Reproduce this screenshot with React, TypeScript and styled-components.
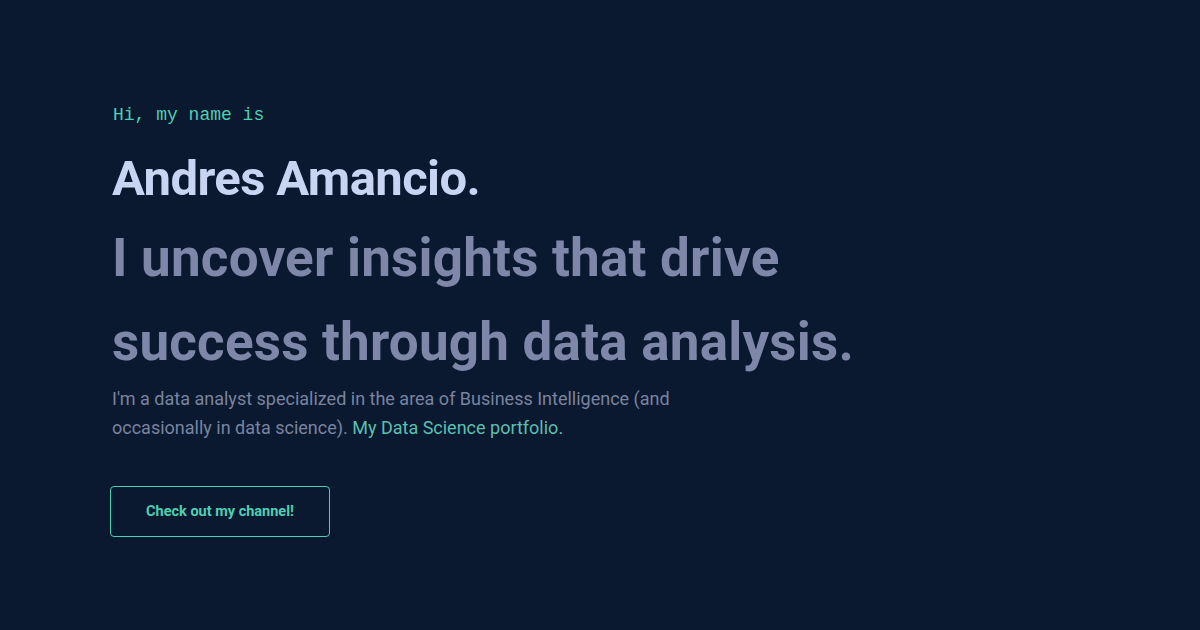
import React from "react";
import styled, { createGlobalStyle } from "styled-components";

const Global = createGlobalStyle`
  html, body { margin: 0; padding: 0; background: #0a192f; }
  body { font-family: Roboto, "Noto Sans", sans-serif; }
`;

const Page = styled.main`
  width: 1200px;
  height: 630px;
  background: #0a192f;
  box-sizing: border-box;
  padding: 104px 0 0 112px;
  display: flex;
  flex-direction: column;
  align-items: flex-start;
`;

const Intro = styled.p`
  margin: 0 0 0 1px;
  font-family: "Liberation Mono", monospace;
  font-size: 18px;
  line-height: 22px;
  color: #4fcfb2;
`;

const Name = styled.h1`
  margin: 23px 0 0 0;
  font-family: Roboto, sans-serif;
  font-weight: 700;
  font-size: 49px;
  line-height: 60px;
  letter-spacing: -0.6px;
  color: #c9d4f2;
`;

const Tagline = styled.h2`
  margin: 7px 0 0 0;
  font-family: Roboto, sans-serif;
  font-weight: 700;
  font-size: 53px;
  line-height: 84px;
  letter-spacing: 0.2px;
  color: #7e87a7;
  max-width: 860px;
`;

const Blurb = styled.p`
  margin: 0;
  font-family: Roboto, sans-serif;
  font-size: 18px;
  line-height: 29px;
  color: #7a839f;
  max-width: 580px;
`;

const Link = styled.a`
  color: #5cbfb0;
  text-decoration: none;
`;

const Button = styled.a`
  margin: 44px 0 0 -2px;
  width: 220px;
  height: 51px;
  box-sizing: border-box;
  border: 1px solid #4fcfb2;
  border-radius: 4px;
  display: flex;
  align-items: center;
  justify-content: center;
  font-family: Roboto, sans-serif;
  font-weight: 700;
  font-size: 14.5px;
  color: #4fcfb2;
  text-decoration: none;
`;

export default function App() {
  return (
    <>
      <Global />
      <Page>
        <Intro>Hi, my name is</Intro>
        <Name>Andres Amancio.</Name>
        <Tagline>
          I uncover insights that drive
          <br />
          success through data analysis.
        </Tagline>
        <Blurb>
          I'm a data analyst specialized in the area of Business Intelligence (and occasionally in data
          science). <Link href="#">My Data Science portfolio.</Link>
        </Blurb>
        <Button href="#">Check out my channel!</Button>
      </Page>
    </>
  );
}
